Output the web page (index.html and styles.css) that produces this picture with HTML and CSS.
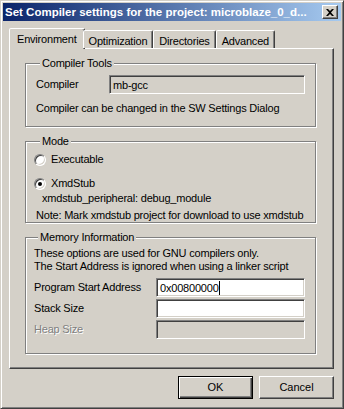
FILE: index.html
```html
<!DOCTYPE html>
<html lang="en">
<head>
    <meta charset="UTF-8">
    <title>Set Compiler settings</title>
    <link rel="stylesheet" href="styles.css">
</head>
<body>
    <div class="window">
        <div class="titlebar">
            <span class="title">Set Compiler settings for the project: microblaze_0_d...</span>
            <span class="close">
                <svg width="8" height="7" viewBox="0 0 8 7"><path d="M0 0h2l2 2 2-2h2L5 3.5 8 7H6L4 5 2 7H0l3-3.5z" fill="#000"/></svg>
            </span>
        </div>

        <div class="body">
            <div class="tabs">
                <div class="tab active">Environment</div>
                <div class="tab">Optimization</div>
                <div class="tab">Directories</div>
                <div class="tab">Advanced</div>
            </div>

            <div class="panel">
                <fieldset class="group tools">
                    <legend>Compiler Tools</legend>
                    <div class="row">
                        <span class="label label-compiler">Compiler</span>
                        <div class="field readonly">mb-gcc</div>
                    </div>
                    <p class="hint">Compiler can be changed in the SW Settings Dialog</p>
                </fieldset>

                <fieldset class="group mode">
                    <legend>Mode</legend>
                    <label class="radio">
                        <span class="radio-dot"></span>
                        Executable
                    </label>
                    <label class="radio checked">
                        <span class="radio-dot"></span>
                        XmdStub
                    </label>
                    <div class="sub">xmdstub_peripheral: debug_module</div>
                    <div class="note">Note: Mark xmdstub project for download to use xmdstub</div>
                </fieldset>

                <fieldset class="group memory">
                    <legend>Memory Information</legend>
                    <div class="info">These options are used for GNU compilers only.</div>
                    <div class="info">The Start Address is ignored when using a linker script</div>
                    <div class="row mem-row first">
                        <span class="label">Program Start Address</span>
                        <div class="field">0x00800000<span class="caret"></span></div>
                    </div>
                    <div class="row mem-row">
                        <span class="label">Stack Size</span>
                        <div class="field"></div>
                    </div>
                    <div class="row mem-row">
                        <span class="label disabled">Heap Size</span>
                        <div class="field readonly"></div>
                    </div>
                </fieldset>
            </div>

            <div class="buttons">
                <button class="btn default">OK</button>
                <button class="btn">Cancel</button>
            </div>
        </div>
    </div>
</body>
</html>
```

FILE: styles.css
```css
* {
    margin: 0;
    padding: 0;
    box-sizing: border-box;
}

body {
    font-family: 'Liberation Sans', Arial, sans-serif;
    font-size: 11px;
    line-height: 13px;
    letter-spacing: -0.2px;
    color: #000;
    background: #d4d0c8;
}

.window {
    width: 344px;
    height: 409px;
    background: #d4d0c8;
    border: 1px solid;
    border-color: #d4d0c8 #404040 #404040 #d4d0c8;
    box-shadow: inset 1px 1px 0 #fff, inset -1px -1px 0 #808080;
    padding: 2px;
    display: flex;
    flex-direction: column;
}

.titlebar {
    height: 18px;
    background: linear-gradient(90deg, #0a246a 0%, #a6caf0 100%);
    display: flex;
    align-items: center;
    padding: 0 3px 0 2px;
}

.title {
    flex: 1;
    color: #fff;
    font-weight: bold;
    font-size: 11.5px;
    letter-spacing: 0;
    white-space: nowrap;
    overflow: hidden;
}

.close {
    width: 16px;
    height: 14px;
    background: #d4d0c8;
    border: 1px solid;
    border-color: #fff #404040 #404040 #fff;
    box-shadow: inset -1px -1px 0 #808080;
    display: flex;
    align-items: center;
    justify-content: center;
}

.body {
    flex: 1;
    padding: 7px 7px 0 6px;
    display: flex;
    flex-direction: column;
}

/* tabs */
.tabs {
    display: flex;
    align-items: flex-end;
    height: 20px;
    padding-left: 2px;
    position: relative;
    z-index: 1;
}

.tab {
    height: 18px;
    padding: 4px 5px 0;
    border: 1px solid;
    border-bottom: none;
    border-color: #fff #404040 transparent #fff;
    border-radius: 2px 2px 0 0;
    box-shadow: inset -1px 0 0 #808080;
    background: #d4d0c8;
    white-space: nowrap;
}

.tab.active {
    height: 21px;
    margin: 0 -2px -1px -2px;
    padding: 4px 7px 0;
}

.panel {
    height: 321px;
    border: 1px solid;
    border-color: #fff #404040 #404040 #fff;
    box-shadow: inset -1px -1px 0 #808080;
    padding: 8px 17px 0 15px;
}

/* group boxes */
.group {
    border: 1px solid #808080;
    box-shadow: inset 1px 1px 0 #fff, 1px 1px 0 #fff;
    padding: 0 2px 0 10px;
    margin-bottom: 8px;
    min-width: 0;
    white-space: nowrap;
}

.group legend {
    padding: 0 2px;
    margin-left: 4px;
    background: #d4d0c8;
    line-height: 13px;
}

.row {
    display: flex;
    align-items: center;
}

.label-compiler {
    width: 73px;
}

.field {
    height: 19px;
    flex: 1;
    background: #fff;
    border: 1px solid;
    border-color: #808080 #fff #fff #808080;
    box-shadow: inset 1px 1px 0 #404040, inset -1px -1px 0 #d4d0c8;
    padding: 2px 3px;
    line-height: 14px;
    display: flex;
    align-items: center;
}

.tools .field,
.memory .field {
    margin-right: 8px;
}

.field.readonly {
    background: #d4d0c8;
}

.caret {
    width: 1px;
    height: 14px;
    background: #000;
}

.tools .row {
    margin-top: 5px;
}

.hint {
    margin: 8px 0 11px;
}

/* mode */
.radio {
    display: flex;
    align-items: center;
    gap: 5px;
    height: 13px;
    margin: 5px 0 0 -2px;
}

.radio + .radio {
    margin-top: 11px;
}

.radio-dot {
    width: 12px;
    height: 12px;
    border-radius: 50%;
    background: #fff;
    border: 1px solid;
    border-color: #808080 #fff #fff #808080;
    box-shadow: inset 1px 1px 0 #404040, inset -1px -1px 0 #d4d0c8;
    display: flex;
    align-items: center;
    justify-content: center;
}

.checked .radio-dot::before {
    content: '';
    width: 4px;
    height: 4px;
    border-radius: 50%;
    background: #000;
}

.sub {
    margin: 2px 0 0 6px;
}

.note {
    margin: 4px 0 0;
}

/* memory */
.memory {
    padding: 3px 2px 0 8px;
}

.memory .label {
    width: 122px;
}

.mem-row {
    margin-top: 2px;
}

.mem-row.first {
    margin-top: 5px;
}

.mem-row:last-child {
    margin-bottom: 14px;
}

.label.disabled {
    color: #808080;
    text-shadow: 1px 1px 0 #fff;
}

/* buttons */
.buttons {
    display: flex;
    justify-content: flex-end;
    gap: 6px;
    margin-top: 7px;
}

.btn {
    width: 75px;
    height: 23px;
    font: inherit;
    background: #d4d0c8;
    border: 1px solid;
    border-color: #fff #404040 #404040 #fff;
    box-shadow: inset -1px -1px 0 #808080;
}

.btn.default {
    border-color: #000;
    box-shadow: inset 1px 1px 0 #fff, inset -1px -1px 0 #404040, inset -2px -2px 0 #808080;
}
```
